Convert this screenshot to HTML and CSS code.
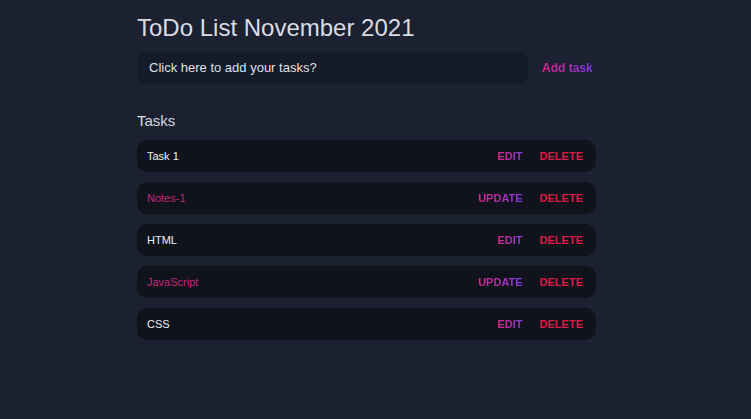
FILE: index.html
```html
<!DOCTYPE html>
<html>
<head>
<meta charset="utf-8">
<link rel="stylesheet" href="styles.css">
</head>
<body>
<main class="app">
  <h1 class="title">ToDo List November 2021</h1>
  <form class="add-form">
    <div class="input">Click here to add your tasks?</div>
    <span class="add-btn grad">Add task</span>
  </form>
  <h2 class="section">Tasks</h2>
  <ul class="list">
    <li class="row"><span class="name">Task 1</span><span class="actions"><span class="btn grad">EDIT</span><span class="btn del">DELETE</span></span></li>
    <li class="row"><span class="name done">Notes-1</span><span class="actions"><span class="btn grad">UPDATE</span><span class="btn del">DELETE</span></span></li>
    <li class="row"><span class="name">HTML</span><span class="actions"><span class="btn grad">EDIT</span><span class="btn del">DELETE</span></span></li>
    <li class="row"><span class="name done">JavaScript</span><span class="actions"><span class="btn grad">UPDATE</span><span class="btn del">DELETE</span></span></li>
    <li class="row"><span class="name">CSS</span><span class="actions"><span class="btn grad">EDIT</span><span class="btn del">DELETE</span></span></li>
  </ul>
</main>
</body>
</html>
```
FILE: styles.css
```css
html, body {
  margin: 0;
  height: 100%;
  background: #1b2130;
  font-family: "Liberation Sans", Arial, sans-serif;
}
.app {
  width: 459px;
  margin-left: 137px;
  padding-top: 13px;
}
.title {
  margin: 0;
  font-size: 24px;
  font-weight: 400;
  line-height: 29px;
  color: #d9dde3;
}
.add-form {
  margin-top: 10px;
  display: flex;
  align-items: center;
}
.input {
  width: 379px;
  height: 32px;
  padding-left: 12px;
  border-radius: 10px;
  background: #141a28;
  color: #dfe2e7;
  font-size: 13px;
  line-height: 32px;
}
.add-btn {
  margin-left: 14px;
  font-size: 12px;
  font-weight: 700;
  white-space: nowrap;
}
.grad {
  background: linear-gradient(90deg, #d9288a 0%, #b12fb8 55%, #7b3ae8 100%);
  -webkit-background-clip: text;
  background-clip: text;
  color: transparent;
}
.section {
  margin: 28px 0 0;
  font-size: 15px;
  font-weight: 400;
  line-height: 18px;
  color: #d6d9de;
}
.list {
  list-style: none;
  margin: 10px 0 0;
  padding: 0;
  display: flex;
  flex-direction: column;
  gap: 10px;
}
.row {
  height: 32px;
  display: flex;
  align-items: center;
  justify-content: space-between;
  padding: 0 13px 0 10px;
  border-radius: 10px;
  background: #10131c;
}
.name {
  font-size: 11px;
  color: #f1f2f4;
}
.name.done {
  color: #c4287a;
}
.actions {
  display: flex;
  gap: 17px;
}
.btn {
  font-size: 11px;
  font-weight: 700;
}
.btn.del {
  color: #d91c47;
}
```
